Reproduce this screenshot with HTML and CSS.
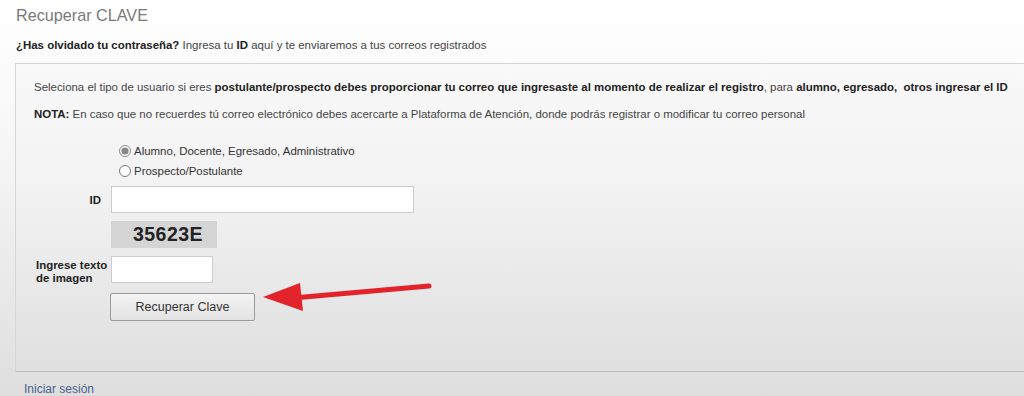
FILE: index.html
```html
<!DOCTYPE html>
<html lang="es">
<head>
<meta charset="utf-8">
<title>Recuperar CLAVE</title>
<link rel="stylesheet" href="styles.css">
</head>
<body>
<div class="page">
  <h1 class="title">Recuperar CLAVE</h1>
  <p class="intro"><b>¿Has olvidado tu contraseña?</b> Ingresa tu <b>ID</b> aquí y te enviaremos a tus correos registrados</p>
  <div class="panel">
    <p class="info">Seleciona el tipo de usuario si eres <b>postulante/prospecto debes proporcionar tu correo que ingresaste al momento de realizar el registro</b>, para <b>alumno, egresado,&nbsp; otros ingresar el ID</b></p>
    <p class="info"><b>NOTA:</b> En caso que no recuerdes tú correo electrónico debes acercarte a Plataforma de Atención, donde podrás registrar o modificar tu correo personal</p>
    <div class="form">
      <div class="label"></div>
      <div class="radios">
        <label class="radio"><input type="radio" name="tipo" checked> Alumno, Docente, Egresado, Administrativo</label>
        <label class="radio"><input type="radio" name="tipo"> Prospecto/Postulante</label>
      </div>
      <div class="label label-id">ID</div>
      <div><input class="field field-id" type="text"></div>
      <div class="label"></div>
      <div><div class="captcha">35623E</div></div>
      <div class="label label-img">Ingrese texto de imagen</div>
      <div><input class="field field-img" type="text"></div>
      <div class="label"></div>
      <div class="btn-row"><button class="btn" type="button">Recuperar Clave</button></div>
    </div>
    <svg class="arrow" width="180" height="40" viewBox="0 0 180 40">
      <line x1="166" y1="8" x2="30" y2="20" stroke="#e3232a" stroke-width="5" stroke-linecap="round"/>
      <polygon points="0,19 37,5 40,33" fill="#e3232a"/>
    </svg>
  </div>
  <a class="login" href="#">Iniciar sesión</a>
</div>
</body>
</html>
```
FILE: styles.css
```css
html, body {
  margin: 0;
  padding: 0;
}
body {
  width: 1024px;
  height: 396px;
  overflow: hidden;
  font-family: "Liberation Sans", Arial, sans-serif;
  font-size: 11.45px;
  color: #333;
  background: linear-gradient(to bottom, #ffffff 0%, #f7f7f7 35%, #e6e6e6 80%, #dedede 100%);
}
.page {
  padding: 5px 0 0 16px;
}
.title {
  margin: 0;
  font-size: 16.2px;
  font-weight: normal;
  color: #7a7a7a;
  line-height: 20px;
}
.intro {
  margin: 12px 0 0 0;
  line-height: 16px;
  color: #444;
  white-space: nowrap;
}
.intro b {
  color: #222;
}
.panel {
  position: relative;
  margin: 10px 0 0 -1px;
  height: 309px;
  box-sizing: border-box;
  border: 1px solid #d6d6d6;
  border-right: none;
  border-bottom-color: #bdbdbd;
  background: linear-gradient(to bottom, #f9f9f9 0%, #f2f2f2 40%, #e6e6e6 80%, #e0e0e0 100%);
  padding: 15px 0 0 18px;
}
.info {
  margin: 0 0 11px 0;
  line-height: 16px;
  color: #444;
  white-space: nowrap;
}
.info b {
  color: #222;
}
.form {
  display: grid;
  grid-template-columns: 77px auto;
  row-gap: 8px;
  margin-top: 19px;
}
.label {
  font-weight: bold;
  color: #222;
  display: flex;
  align-items: center;
}
.label-id {
  justify-content: flex-end;
  padding-right: 10px;
}
.label-img {
  padding-left: 2px;
  padding-top: 3px;
  line-height: 13px;
}
.radios {
  display: flex;
  flex-direction: column;
  padding-left: 6px;
  margin-bottom: -3px;
}
.radio {
  display: flex;
  align-items: center;
  height: 20px;
  color: #333;
}
.radio input {
  margin: 0 3px 0 2px;
  width: 12px;
  height: 12px;
  accent-color: #888;
}
.field {
  box-sizing: border-box;
  height: 27px;
  border: 1px solid #ccc;
  background: #fff;
  margin: 0;
  padding: 2px 4px;
  display: block;
}
.field-id {
  width: 303px;
}
.field-img {
  width: 102px;
}
.captcha {
  box-sizing: border-box;
  width: 106px;
  height: 27px;
  padding-left: 8px;
  background: #d5d5d5;
  font-size: 19.5px;
  font-weight: bold;
  color: #222;
  display: flex;
  align-items: center;
  justify-content: center;
  letter-spacing: 0.5px;
}
.btn-row {
  margin-left: -1px;
}
.btn {
  box-sizing: border-box;
  width: 145px;
  height: 28px;
  font-family: "Liberation Sans", Arial, sans-serif;
  font-size: 12.5px;
  color: #333;
  border: 1px solid #9a9a9a;
  border-radius: 2px;
  background: linear-gradient(to bottom, #f4f4f4, #e2e2e2);
  padding: 0;
}
.arrow {
  position: absolute;
  left: 247px;
  top: 214px;
}
.login {
  display: block;
  margin: 10px 0 0 8px;
  color: #4b5f8c;
  text-decoration: none;
  font-size: 12px;
  line-height: 14px;
}
```
